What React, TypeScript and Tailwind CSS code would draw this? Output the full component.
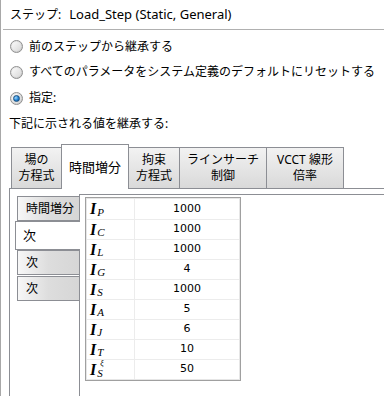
import React from 'react';

const font = "font-['Noto_Sans','Noto_Sans_CJK_JP',sans-serif]";

function Radio({ checked }: { checked?: boolean }) {
  return (
    <span className="relative flex h-[13px] w-[13px] items-center justify-center rounded-full border border-[#8f8f8f] bg-linear-to-br from-[#f0f0f0] to-[#c8c8c8]">
      <span className="h-[9px] w-[9px] rounded-full bg-linear-to-br from-[#fafafa] to-[#d9d9d9]" />
      {checked && (
        <span className="absolute h-[7px] w-[7px] rounded-full border border-[#1c5180] bg-[radial-gradient(circle_at_35%_35%,#9fd9ff,#1f7fd0_55%,#0d4f8f)]" />
      )}
    </span>
  );
}

const rows: { sub: string; sup?: string; value: string }[] = [
  { sub: 'P', value: '1000' },
  { sub: 'C', value: '1000' },
  { sub: 'L', value: '1000' },
  { sub: 'G', value: '4' },
  { sub: 'S', value: '1000' },
  { sub: 'A', value: '5' },
  { sub: 'J', value: '6' },
  { sub: 'T', value: '10' },
  { sub: 'S', sup: 'ξ', value: '50' },
];

function TopTab({ label, width, selected }: { label: React.ReactNode; width: string; selected?: boolean }) {
  if (selected) {
    return (
      <div
        className={`${width} relative z-10 -mb-px -ml-px flex h-[45px] items-center justify-center border border-b-0 border-[#8c8e94] bg-white text-[13px] leading-[15px]`}
      >
        {label}
      </div>
    );
  }
  return (
    <div
      className={`${width} -ml-px flex h-[41px] flex-col items-center justify-center border border-b-0 border-[#8c8e94] bg-linear-to-b from-[#f2f2f2] to-[#d9d9d9] text-center text-[12px] leading-[16px]`}
    >
      {label}
    </div>
  );
}

function SideTab({ label, selected }: { label: string; selected?: boolean }) {
  if (selected) {
    return (
      <div className="relative z-10 -mr-px flex h-[29px] w-[65px] items-center border border-r-0 border-[#8c8e94] bg-white pl-[7px] text-[13px]">
        {label}
      </div>
    );
  }
  return (
    <div className="ml-[2px] flex h-[25px] w-[62px] items-center border border-r-0 border-[#8c8e94] bg-linear-to-r from-[#f7f7f7] via-[#dddddd] to-[#d6d6d6] pl-[8px] text-[12px]">
      {label}
    </div>
  );
}

export default function App() {
  return (
    <div className={`${font} h-[396px] w-[384px] overflow-hidden border-l border-[#a8a8a8] bg-white text-black`}>
      {/* Header */}
      <div className="ml-[2px] flex h-[30px] items-center border-b border-[#b0b0b0] pl-[7px] text-[12px]">
        <span>ステップ:</span>
        <span className="ml-[8px] text-[13px]">Load_Step (Static, General)</span>
      </div>

      {/* Options */}
      <div className="flex flex-col pt-[4px] text-[12px]">
        <label className="flex h-[25px] items-center gap-[6px] pl-[9px]">
          <Radio />
          <span>前のステップから継承する</span>
        </label>
        <label className="flex h-[26px] items-center gap-[6px] pl-[9px]">
          <Radio />
          <span>すべてのパラメータをシステム定義のデフォルトにリセットする</span>
        </label>
        <label className="flex h-[26px] items-center gap-[6px] pl-[9px]">
          <Radio checked />
          <span>指定:</span>
        </label>
        <div className="flex h-[26px] items-center pl-[8px]">下記に示される値を継承する:</div>
      </div>

      {/* Tabs */}
      <div className="mt-[7px] ml-[8px]">
        <div className="flex items-end pl-[3px]">
          <TopTab width="w-[51px]" label={<><span>場の</span><span>方程式</span></>} />
          <TopTab width="w-[68px]" label="時間増分" selected />
          <TopTab width="w-[52px]" label={<><span>拘束</span><span>方程式</span></>} />
          <TopTab width="w-[88px]" label={<><span>ラインサーチ</span><span>制御</span></>} />
          <TopTab width="w-[78px]" label={<><span>VCCT 線形</span><span>倍率</span></>} />
        </div>

        <div className="flex h-[220px] border-t border-l border-[#8c8e94] pl-[5px]">
          <div className="flex flex-col pt-[7px]">
            <SideTab label="時間増分" />
            <SideTab label="次" selected />
            <SideTab label="次" />
            <div className="h-px" />
            <SideTab label="次" />
          </div>

          <div className="mt-[5px] flex-1 border-t border-l border-[#8c8e94] pt-[2px] pl-[5px]">
            <div className="w-[156px] border border-[#a0a0a0]">
              <div className="border border-[#e6e6e6]">
                {rows.map((r, i) => (
                  <div key={i} className={`flex h-[20px] ${i > 0 ? 'border-t border-[#ececec]' : ''}`}>
                    <div className="flex w-[48px] items-center border-r border-[#ececec] pl-[3px] font-['Liberation_Serif',serif] italic">
                      <span className="text-[16px] font-bold leading-none">I</span>
                      <span className="relative ml-[1px] h-full w-[12px]">
                        {r.sup && (
                          <span className="absolute top-0 left-[3px] text-[8px] leading-[8px]">{r.sup}</span>
                        )}
                        <span
                          className={`absolute left-0 text-[11px] leading-[11px] ${r.sup ? 'bottom-0' : 'bottom-[1px]'}`}
                        >
                          {r.sub}
                        </span>
                      </span>
                    </div>
                    <div className="flex flex-1 items-center justify-center font-['DejaVu_Sans',sans-serif] text-[11px]">
                      {r.value}
                    </div>
                  </div>
                ))}
              </div>
            </div>
          </div>
        </div>
      </div>
    </div>
  );
}
